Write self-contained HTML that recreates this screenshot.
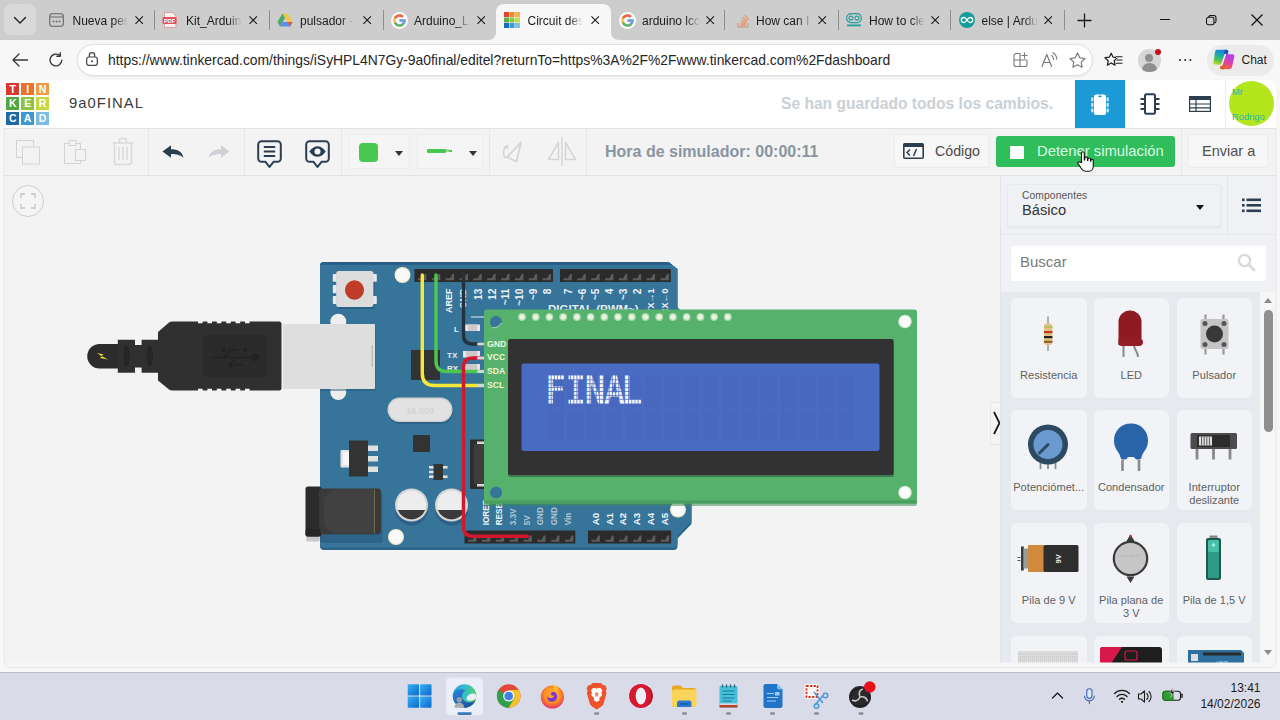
<!DOCTYPE html>
<html><head><meta charset="utf-8"><title>Circuit design</title>
<style>
*{box-sizing:border-box;margin:0;padding:0}
html,body{width:1280px;height:720px;overflow:hidden;background:#f3f3f3;font-family:"Liberation Sans",sans-serif;color:#222}
.abs{position:absolute}
svg{display:block;overflow:visible}
#tabbar{left:0;top:0;width:1280px;height:40px;background:#cdcdcd}
#addr{left:0;top:40px;width:1280px;height:40px;background:#f7f7f7}
#tkhead{left:0;top:80px;width:1280px;height:48px;background:#fff}
#tool{left:0;top:128px;width:1280px;height:48px;background:#f3f3f3;border-top:1px solid #e4e4e4;border-bottom:1px solid #e2e2e2}
#canvas{left:0;top:175px;width:1000px;height:493px;background:#f3f3f3}
#panel{left:1000px;top:175px;width:280px;height:493px;background:#f0f1f4}
#taskbar{left:0;top:672px;width:1280px;height:48px;background:#dadbe8}
.tabt{top:14.3px;height:16px;font-size:12px;color:#1b1b1b;white-space:nowrap;overflow:hidden;-webkit-mask-image:linear-gradient(90deg,#000 75%,transparent 100%);mask-image:linear-gradient(90deg,#000 75%,transparent 100%)}
.lg{width:12.8px;height:12.8px;color:#fff;font-size:10.5px;font-weight:bold;text-align:center;line-height:13px}
.vs{top:129px;width:1px;height:46px;background:#e6e6e6}
.bx{border:1px solid #ececec;border-radius:2px;background:#f5f5f5}
.tri{width:0;height:0;border-left:4.5px solid transparent;border-right:4.5px solid transparent;border-top:5px solid #2c3440}
.card{width:75.5px;border-radius:6px;background:#f1f3f6}
.cl{width:83.5px;text-align:center;font-size:11px;line-height:13.5px;color:#606060;padding-top:0.8px;white-space:nowrap;letter-spacing:0.05px}
</style></head><body>
<div id="tabbar" class="abs"></div>
<div id="addr" class="abs"></div>
<div id="tkhead" class="abs"></div>
<div id="tool" class="abs"></div>
<div id="canvas" class="abs"></div>
<div id="panel" class="abs"></div>
<div id="taskbar" class="abs"></div>
<div class="abs" style="left:4px;top:4px;width:32px;height:31px;border-radius:7px;background:#d9d9d9"></div>
<svg class="abs" style="left:13px;top:16px" width="14" height="9" viewBox="0 0 14 9"><path d="M1.5 1.5L7 7l5.5-5.5" fill="none" stroke="#222" stroke-width="1.4" stroke-linecap="round" stroke-linejoin="round"/></svg>
<svg class="abs" style="left:488px;top:4px" width="132" height="36" viewBox="0 0 132 36"><path d="M0 36C5 36 8 33 8 28V8C8 3.5 11.5 0 16 0H115C119.5 0 123 3.5 123 8V28C123 33 126 36 132 36z" fill="#f7f7f7"/></svg>
<div class="abs" style="left:48px;top:12px;width:16px;height:16px;display:flex;align-items:center;justify-content:center"><svg width="15" height="14" viewBox="0 0 15 14"><rect x="0.7" y="0.7" width="13.6" height="12.6" rx="2.5" fill="none" stroke="#666" stroke-width="1.1"/><line x1="0.7" y1="4" x2="14.3" y2="4" stroke="#666" stroke-width="1"/><circle cx="4.5" cy="8.5" r="0.9" fill="#666"/><circle cx="7.5" cy="8.5" r="0.9" fill="#666"/><circle cx="10.5" cy="8.5" r="0.9" fill="#666"/></svg></div>
<div class="abs tabt" style="left:72.5px;width:55px">Nueva pes</div>
<svg class="abs" style="left:135px;top:16.2px" width="8.4" height="8.4" viewBox="0 0 9 9"><path d="M0.5 0.5l8 8M8.5 0.5l-8 8" stroke="#1b1b1b" stroke-width="1.2" fill="none"/></svg>
<div class="abs" style="left:162px;top:12px;width:16px;height:16px;display:flex;align-items:center;justify-content:center"><svg width="16" height="16" viewBox="0 0 16 16"><path d="M2.5 0.5h8l3.5 3.5v11.5h-11.5z" fill="#f6f0f0" stroke="#d8a0a4" stroke-width="1"/><rect x="0.5" y="5" width="14" height="7" rx="1" fill="#e0525e"/><text x="7.5" y="10.6" font-size="5.5" font-weight="bold" fill="#fff" text-anchor="middle" font-family="Liberation Sans,sans-serif">PDF</text></svg></div>
<div class="abs tabt" style="left:186px;width:56px">Kit_Arduin</div>
<svg class="abs" style="left:249px;top:16.2px" width="8.4" height="8.4" viewBox="0 0 9 9"><path d="M0.5 0.5l8 8M8.5 0.5l-8 8" stroke="#1b1b1b" stroke-width="1.2" fill="none"/></svg>
<div class="abs" style="left:277px;top:12px;width:16px;height:16px;display:flex;align-items:center;justify-content:center"><svg width="16" height="14" viewBox="0 0 16 14"><path d="M5.4 0.5h5.2l5 8.6h-5.2z" fill="#f5c44a"/><path d="M5.4 0.5L0.4 9.1l2.6 4.4 5-8.6z" fill="#4aa86a"/><path d="M3 13.5h10l2.6-4.4H5.6z" fill="#5b8def"/><path d="M10.4 9.1h5.2L13 13.5z" fill="#e0574a"/></svg></div>
<div class="abs tabt" style="left:300px;width:54px">pulsador -</div>
<svg class="abs" style="left:362.5px;top:16.2px" width="8.4" height="8.4" viewBox="0 0 9 9"><path d="M0.5 0.5l8 8M8.5 0.5l-8 8" stroke="#1b1b1b" stroke-width="1.2" fill="none"/></svg>
<div class="abs" style="left:390.5px;top:11.5px;width:17px;height:17px;border-radius:50%;background:#fbfbfb"></div>
<div class="abs" style="left:391px;top:12px;width:16px;height:16px;display:flex;align-items:center;justify-content:center"><svg width="15" height="15" viewBox="0 0 48 48"><path fill="#f3c34b" d="M43.6 20.1H42V20H24v8h11.3C33.7 32.7 29.2 36 24 36c-6.6 0-12-5.4-12-12s5.4-12 12-12c3.1 0 5.8 1.2 8 3l5.7-5.7C34 6.1 29.3 4 24 4 13 4 4 13 4 24s9 20 20 20 20-9 20-20c0-1.3-.1-2.7-.4-3.9z"/><path fill="#e8665a" d="M6.3 14.7l6.6 4.8C14.7 15.1 19 12 24 12c3.1 0 5.8 1.2 8 3l5.7-5.7C34 6.1 29.3 4 24 4 16.3 4 9.7 8.3 6.3 14.7z"/><path fill="#5fb57a" d="M24 44c5.2 0 9.9-2 13.4-5.2l-6.2-5.2C29.2 35.1 26.7 36 24 36c-5.2 0-9.6-3.3-11.3-8l-6.5 5C9.5 39.6 16.2 44 24 44z"/><path fill="#6a9cf0" d="M43.6 20.1H42V20H24v8h11.3c-.8 2.2-2.2 4.2-4.1 5.6l6.2 5.2C37 39.2 44 34 44 24c0-1.3-.1-2.7-.4-3.9z"/></svg></div>
<div class="abs tabt" style="left:414px;width:56px">Arduino_LI</div>
<svg class="abs" style="left:477px;top:16.2px" width="8.4" height="8.4" viewBox="0 0 9 9"><path d="M0.5 0.5l8 8M8.5 0.5l-8 8" stroke="#1b1b1b" stroke-width="1.2" fill="none"/></svg>
<div class="abs" style="left:504px;top:12px;width:16px;height:16px;display:flex;align-items:center;justify-content:center"><svg width="16" height="16" viewBox="0 0 16 16"><rect x="0" y="0" width="5" height="5" fill="#e0452e"/><rect x="5.5" y="0" width="5" height="5" fill="#f08a2e"/><rect x="11" y="0" width="5" height="5" fill="#f6b04a"/><rect x="0" y="5.5" width="5" height="5" fill="#5bb04a"/><rect x="5.5" y="5.5" width="5" height="5" fill="#8cc63e"/><rect x="11" y="5.5" width="5" height="5" fill="#c4dc4a"/><rect x="0" y="11" width="5" height="5" fill="#1f6eb4"/><rect x="5.5" y="11" width="5" height="5" fill="#3d9ad6"/><rect x="11" y="11" width="5" height="5" fill="#7cc0e6"/></svg></div>
<div class="abs tabt" style="left:527.5px;width:55px">Circuit des</div>
<svg class="abs" style="left:591px;top:16.2px" width="8.4" height="8.4" viewBox="0 0 9 9"><path d="M0.5 0.5l8 8M8.5 0.5l-8 8" stroke="#1b1b1b" stroke-width="1.2" fill="none"/></svg>
<div class="abs" style="left:618.5px;top:11.5px;width:17px;height:17px;border-radius:50%;background:#fbfbfb"></div>
<div class="abs" style="left:619px;top:12px;width:16px;height:16px;display:flex;align-items:center;justify-content:center"><svg width="15" height="15" viewBox="0 0 48 48"><path fill="#f3c34b" d="M43.6 20.1H42V20H24v8h11.3C33.7 32.7 29.2 36 24 36c-6.6 0-12-5.4-12-12s5.4-12 12-12c3.1 0 5.8 1.2 8 3l5.7-5.7C34 6.1 29.3 4 24 4 13 4 4 13 4 24s9 20 20 20 20-9 20-20c0-1.3-.1-2.7-.4-3.9z"/><path fill="#e8665a" d="M6.3 14.7l6.6 4.8C14.7 15.1 19 12 24 12c3.1 0 5.8 1.2 8 3l5.7-5.7C34 6.1 29.3 4 24 4 16.3 4 9.7 8.3 6.3 14.7z"/><path fill="#5fb57a" d="M24 44c5.2 0 9.9-2 13.4-5.2l-6.2-5.2C29.2 35.1 26.7 36 24 36c-5.2 0-9.6-3.3-11.3-8l-6.5 5C9.5 39.6 16.2 44 24 44z"/><path fill="#6a9cf0" d="M43.6 20.1H42V20H24v8h11.3c-.8 2.2-2.2 4.2-4.1 5.6l6.2 5.2C37 39.2 44 34 44 24c0-1.3-.1-2.7-.4-3.9z"/></svg></div>
<div class="abs tabt" style="left:642px;width:58px">arduino lcc</div>
<svg class="abs" style="left:705.5px;top:16.2px" width="8.4" height="8.4" viewBox="0 0 9 9"><path d="M0.5 0.5l8 8M8.5 0.5l-8 8" stroke="#1b1b1b" stroke-width="1.2" fill="none"/></svg>
<div class="abs" style="left:735px;top:12px;width:16px;height:16px;display:flex;align-items:center;justify-content:center"><svg width="13" height="15" viewBox="0 0 13 15"><path d="M1 10v4h10v-4" fill="none" stroke="#c9a58c" stroke-width="1.3"/><path d="M3 12h6M3.2 9.6l5.8 1M4 7l5.4 2.4M5.6 4.4l4.6 3.8M8 2l3.4 4.8" stroke="#e8956a" stroke-width="1.3" fill="none"/></svg></div>
<div class="abs tabt" style="left:756px;width:56px">How can I</div>
<svg class="abs" style="left:817.5px;top:16.2px" width="8.4" height="8.4" viewBox="0 0 9 9"><path d="M0.5 0.5l8 8M8.5 0.5l-8 8" stroke="#1b1b1b" stroke-width="1.2" fill="none"/></svg>
<div class="abs" style="left:846px;top:12px;width:16px;height:16px;display:flex;align-items:center;justify-content:center"><svg width="16" height="14" viewBox="0 0 16 14"><rect x="0.6" y="0.6" width="14.8" height="9" rx="4.5" fill="none" stroke="#2a9c9c" stroke-width="1.2"/><circle cx="5" cy="5.1" r="2" fill="none" stroke="#2a9c9c" stroke-width="1.1"/><circle cx="11" cy="5.1" r="2" fill="none" stroke="#2a9c9c" stroke-width="1.1"/><rect x="1" y="11.5" width="14" height="1.8" fill="#2a9c9c"/></svg></div>
<div class="abs tabt" style="left:869px;width:56px">How to cle</div>
<svg class="abs" style="left:931px;top:16.2px" width="8.4" height="8.4" viewBox="0 0 9 9"><path d="M0.5 0.5l8 8M8.5 0.5l-8 8" stroke="#1b1b1b" stroke-width="1.2" fill="none"/></svg>
<div class="abs" style="left:958.5px;top:12px;width:16px;height:16px;display:flex;align-items:center;justify-content:center"><svg width="16" height="16" viewBox="0 0 16 16"><circle cx="8" cy="8" r="8" fill="#169c9c"/><path d="M8 8c-1-1.7-2-2.5-3.2-2.5a2.5 2.5 0 0 0 0 5c1.2 0 2.2-.8 3.2-2.5zm0 0c1-1.7 2-2.5 3.2-2.5a2.5 2.5 0 0 1 0 5c-1.2 0-2.2-.8-3.2-2.5z" fill="none" stroke="#fff" stroke-width="1.3"/></svg></div>
<div class="abs tabt" style="left:981.5px;width:56px">else | Ardu</div>
<svg class="abs" style="left:1043.5px;top:16.2px" width="8.4" height="8.4" viewBox="0 0 9 9"><path d="M0.5 0.5l8 8M8.5 0.5l-8 8" stroke="#1b1b1b" stroke-width="1.2" fill="none"/></svg>
<div class="abs" style="left:154px;top:10px;width:1px;height:20px;background:#8d8d8d"></div>
<div class="abs" style="left:269px;top:10px;width:1px;height:20px;background:#8d8d8d"></div>
<div class="abs" style="left:382.5px;top:10px;width:1px;height:20px;background:#8d8d8d"></div>
<div class="abs" style="left:724px;top:10px;width:1px;height:20px;background:#8d8d8d"></div>
<div class="abs" style="left:837.5px;top:10px;width:1px;height:20px;background:#8d8d8d"></div>
<div class="abs" style="left:950px;top:10px;width:1px;height:20px;background:#8d8d8d"></div>
<div class="abs" style="left:1063.5px;top:10px;width:1px;height:20px;background:#8d8d8d"></div>
<svg class="abs" style="left:1077px;top:13px" width="15" height="15" viewBox="0 0 15 15"><path d="M7.5 0.5v14M0.5 7.5h14" stroke="#1b1b1b" stroke-width="1.3" fill="none"/></svg>
<div class="abs" style="left:1160px;top:19px;width:10px;height:1.3px;background:#111"></div>
<svg class="abs" style="left:1205.5px;top:15px" width="10.5" height="10.5" viewBox="0 0 12 12"><rect x="0.6" y="2.6" width="8.5" height="8.5" rx="2" fill="none" stroke="#111" stroke-width="1.2"/><path d="M3 2.4V2.6C3 1.4 3.9 0.6 5 0.6H9C10.4 0.6 11.4 1.6 11.4 3V7C11.4 8.1 10.6 9 9.4 9" fill="none" stroke="#111" stroke-width="1.2"/></svg>
<svg class="abs" style="left:1251px;top:14px" width="12" height="12" viewBox="0 0 12 12"><path d="M0.5 0.5l11 11M11.5 0.5l-11 11" stroke="#111" stroke-width="1.3" fill="none"/></svg>
<!-- back -->
<svg class="abs" style="left:12px;top:53px" width="16" height="14" viewBox="0 0 16 14"><path d="M15.5 7H1.2M7 1L1 7l6 6" fill="none" stroke="#3a3a3a" stroke-width="1.4" stroke-linecap="round" stroke-linejoin="round"/></svg>
<!-- refresh -->
<svg class="abs" style="left:48px;top:52px" width="16" height="16" viewBox="0 0 16 16"><path d="M13.8 8.2A5.9 5.9 0 1 1 11.6 3.4" fill="none" stroke="#3a3a3a" stroke-width="1.4" stroke-linecap="round"/><path d="M12.3 0.8v3.4h-3.4" fill="none" stroke="#3a3a3a" stroke-width="1.4" stroke-linecap="round" stroke-linejoin="round"/></svg>
<!-- pill -->
<div class="abs" style="left:76.5px;top:44px;width:1016.5px;height:32px;border-radius:16px;background:#fff;border:1px solid #e3e3e3;box-shadow:0 0.5px 1.5px rgba(0,0,0,0.1)"></div>
<!-- lock -->
<svg class="abs" style="left:86px;top:52px" width="12" height="14" viewBox="0 0 12 14"><rect x="0.7" y="5" width="10.6" height="8.3" rx="2" fill="none" stroke="#444" stroke-width="1.2"/><path d="M3.3 5V3.4a2.7 2.7 0 0 1 5.4 0V5" fill="none" stroke="#444" stroke-width="1.2"/><circle cx="6" cy="9.2" r="1" fill="#444"/></svg>
<div class="abs" id="url" style="left:108px;top:52px;font-size:13.9px;color:#262626;white-space:nowrap;letter-spacing:-0.01px">https://www.tinkercad.com/things/iSyHPL4N7Gy-9a0final/editel?returnTo=https%3A%2F%2Fwww.tinkercad.com%2Fdashboard</div>
<!-- apps icon -->
<svg class="abs" style="left:1013px;top:52px" width="16" height="16" viewBox="0 0 16 16"><path d="M7 1.5H3a2 2 0 0 0-2 2v9a2 2 0 0 0 2 2h9a2 2 0 0 0 2-2V9M7 1.5v13M1 8h13M11.5 0.8v5.4M8.8 3.5h5.4" fill="none" stroke="#7a7a7a" stroke-width="1.1" stroke-linecap="round"/></svg>
<!-- read aloud -->
<svg class="abs" style="left:1041px;top:52px" width="18" height="16" viewBox="0 0 18 16"><path d="M1 14.5L5.8 2.5 10.6 14.5M2.7 10.5h6.2" fill="none" stroke="#7a7a7a" stroke-width="1.2" stroke-linecap="round" stroke-linejoin="round"/><path d="M10.5 3.5a5 5 0 0 1 2.2 4M12 0.8a8 8 0 0 1 3.8 6.4" fill="none" stroke="#7a7a7a" stroke-width="1.1" stroke-linecap="round"/></svg>
<!-- star -->
<svg class="abs" style="left:1069px;top:52px" width="17" height="16" viewBox="0 0 17 16"><path d="M8.5 1l2.3 4.8 5.2.7-3.8 3.6.9 5.2-4.6-2.5-4.6 2.5.9-5.2L1 6.5l5.2-.7z" fill="none" stroke="#7a7a7a" stroke-width="1.2" stroke-linejoin="round"/></svg>
<!-- favorites -->
<svg class="abs" style="left:1104px;top:52px" width="19" height="16" viewBox="0 0 19 16"><path d="M7.2 1.2l1.9 4 4.3.5-3.2 3 .8 4.4L7.2 11l-3.8 2.1.8-4.4L1 5.7l4.3-.5z" fill="none" stroke="#222" stroke-width="1.25" stroke-linejoin="round"/><path d="M12 4.75h6.2M12.5 8h5.7M12 11.25h6.2" stroke="#f7f7f7" stroke-width="2.6"/><path d="M12.3 4.75h5.7M13 8h5M12.3 11.25h5.7" stroke="#222" stroke-width="1.2" stroke-linecap="round"/></svg>
<!-- profile -->
<div class="abs" style="left:1138px;top:49px;width:22.5px;height:22.5px;border-radius:50%;background:#d6d6d6;overflow:hidden"><div class="abs" style="left:7.25px;top:4.5px;width:8px;height:8px;border-radius:50%;background:#8f8f8f"></div><div class="abs" style="left:4px;top:13.5px;width:14.5px;height:12px;border-radius:7px 7px 0 0;background:#8f8f8f"></div></div>
<div class="abs" style="left:1154.5px;top:48.7px;width:6px;height:6px;border-radius:50%;background:#c50f1f"></div>
<!-- dots -->
<div class="abs" style="left:1178.5px;top:58.5px;width:2.6px;height:2.6px;border-radius:50%;background:#222;box-shadow:5.2px 0 0 #222,10.4px 0 0 #222"></div>
<!-- chat pill -->
<div class="abs" style="left:1206.5px;top:44.5px;width:67.5px;height:31px;border-radius:15.5px;background:#ebebeb"></div>
<svg class="abs" style="left:1212.5px;top:49.4px" width="22" height="21" viewBox="0 0 22 21"><defs><linearGradient id="cpa" x1="0.3" y1="0" x2="0" y2="1"><stop offset="0" stop-color="#1a8ad8"/><stop offset="0.35" stop-color="#20b0a0"/><stop offset="0.65" stop-color="#58c848"/><stop offset="1" stop-color="#e8e020"/></linearGradient><linearGradient id="cpb" x1="0.3" y1="0" x2="0" y2="1"><stop offset="0" stop-color="#b040e8"/><stop offset="0.45" stop-color="#e040a0"/><stop offset="1" stop-color="#f07030"/></linearGradient></defs><path d="M4 0.8H13Q15.8 0.8 15 3.5L12 14Q11.5 15.8 9.5 15.8H2.5Q0 15.8 0.5 13.3L2 3Q2.3 0.8 4 0.8z" fill="url(#cpa)"/><path d="M11.5 0.8H13Q16 0.8 15.2 3.5L14.6 5.5H11z" fill="#1a50c0"/><path d="M13 5.3H19Q22 5.3 21.3 8L19 18Q18.5 20.3 16 20.3H9Q6.5 20.3 7.3 18L10.8 7Q11.3 5.3 13 5.3z" fill="url(#cpb)"/><path d="M12.3 5.5L8.5 16.5" stroke="#f4f4f4" stroke-width="1.6" stroke-linecap="round"/><path d="M7.5 17.5Q6.8 20.3 9.5 20.3H11L12.5 15.5z" fill="#d85a20"/></svg>
<div class="abs" style="left:1241.5px;top:53.3px;font-size:12px;color:#222">Chat</div>

<div class="abs lg" style="left:6.4px;top:82.6px;background:#d63a2e">T</div>
<div class="abs lg" style="left:21.25px;top:82.6px;background:#e8742e">I</div>
<div class="abs lg" style="left:36.1px;top:82.6px;background:#f09c44">N</div>
<div class="abs lg" style="left:6.4px;top:97.4px;background:#50a842">K</div>
<div class="abs lg" style="left:21.25px;top:97.4px;background:#8ec442">E</div>
<div class="abs lg" style="left:36.1px;top:97.4px;background:#c4d844">R</div>
<div class="abs lg" style="left:6.4px;top:112.2px;background:#1e68a8">C</div>
<div class="abs lg" style="left:21.25px;top:112.2px;background:#3c98d2">A</div>
<div class="abs lg" style="left:36.1px;top:112.2px;background:#7cbee2">D</div>
<div class="abs" style="left:69px;top:95px;font-size:14.8px;letter-spacing:1.05px;color:#3c3c3c;white-space:nowrap">9a0FINAL</div>
<div class="abs" style="left:781px;top:94.5px;font-size:15.6px;font-weight:bold;color:#cad0d5;white-space:nowrap">Se han guardado todos los cambios.</div>
<div class="abs" style="left:1075px;top:80px;width:50px;height:48px;background:#1c9ad6"></div>
<svg class="abs" style="left:1089px;top:93px" width="22" height="24" viewBox="0 0 22 24"><rect x="5" y="1.5" width="12" height="20.5" rx="2" fill="#fff"/><ellipse cx="11" cy="3.3" rx="1.8" ry="0.9" fill="#1c9ad6"/><g fill="#d8f0fc"><rect x="2.3" y="4.5" width="2" height="3.8"/><rect x="2.3" y="10" width="2" height="3.8"/><rect x="2.3" y="15.5" width="2" height="3.8"/><rect x="17.7" y="4.5" width="2" height="3.8"/><rect x="17.7" y="10" width="2" height="3.8"/><rect x="17.7" y="15.5" width="2" height="3.8"/></g></svg>
<svg class="abs" style="left:1140px;top:93px" width="20" height="22" viewBox="0 0 20 22"><rect x="5" y="1.2" width="10" height="19.6" rx="1.5" fill="none" stroke="#2c3e50" stroke-width="2"/><path d="M0.5 6h4M0.5 11h4M0.5 16h4M15.5 6h4M15.5 11h4M15.5 16h4" stroke="#2c3e50" stroke-width="1.8"/></svg>
<svg class="abs" style="left:1189px;top:96px" width="22" height="16" viewBox="0 0 22 16"><rect x="0" y="0" width="22" height="4" fill="#2c3e50"/><rect x="0.6" y="0.6" width="20.8" height="14.8" fill="none" stroke="#2c3e50" stroke-width="1.2"/><path d="M0 8h22M0 11.8h22M7 4v12" stroke="#2c3e50" stroke-width="1.2"/></svg>
<div class="abs" style="left:1225px;top:80px;width:1px;height:48px;background:#ececec"></div>
<div class="abs" style="left:1228.5px;top:81px;width:45px;height:45px;border-radius:50%;background:#b4e61e"></div>
<div class="abs" style="left:1232px;top:87px;font-size:9.3px;color:#22b8b0;white-space:nowrap">Mr</div>
<div class="abs" style="left:1232px;top:111.5px;font-size:9.3px;color:#22b8b0;white-space:nowrap">Rodrigo</div>
<svg class="abs" style="left:0;top:175px" width="1003" height="493" viewBox="0 175 1003 493" font-family="Liberation Sans, sans-serif">
<defs><filter id="sh" x="-10%" y="-10%" width="120%" height="130%"><feGaussianBlur stdDeviation="1.2"/></filter></defs>
<circle cx="28" cy="201" r="15.5" fill="#f5f5f5" stroke="#cfcfcf" stroke-width="1"/>
<path d="M21 198v-4h4M31 194h4v4M35 204v4h-4M25 208h-4v-4" fill="none" stroke="#c4c4c4" stroke-width="1.3"/>
<g>
<path d="M99.5 344H118V368.5H99.5A12.25 12.25 0 0 1 99.5 344z" fill="#2c2c2c"/>
<path d="M97 353l6.5 1.5-2 1.5 6.5 3.5-8-1.5 2-1.5z" fill="#f0e030"/>
<path d="M117.8 339.8H135V345H141.6V339.8H158.5V372.8H141.6V367.5H135V372.8H117.8z" fill="#303030"/>
<ellipse cx="126.5" cy="356" rx="3.3" ry="10.5" fill="#262626"/><ellipse cx="149.8" cy="356" rx="3.3" ry="10.5" fill="#262626"/>
<path d="M158 332L169 322.5Q170.5 321.5 172.5 321.5H198v1.8h4.6v-1.8H207.4v1.8h4.6v-1.8H216.8v1.8h4.6v-1.8H226.2v1.8h4.6v-1.8H235.6v1.8h4.6v-1.8H245v1.8h4.6v-1.8H279Q281.5 321.5 281.5 324V388Q281.5 390.5 279 390.5H249.6v-1.8h-4.6v1.8H240.2v-1.8h-4.6v1.8H230.8v-1.8h-4.6v1.8H221.4v-1.8h-4.6v1.8H212.0v-1.8h-4.6v1.8H202.6v-1.8h-4.6v1.8H172.5Q170.5 390.5 169 389.5L158 380.5z" fill="#303030"/>
<rect x="203.5" y="335" width="64" height="42" fill="#2a2a2a"/>
<g stroke="#222" stroke-width="1.3" fill="none"><path d="M212 357.5h42M224 357.5l6-7.5h8M231 357.5l6 7.5h6"/></g><circle cx="224" cy="350" r="2.2" fill="#222"/><rect x="252" y="354" width="7" height="7" fill="#222"/><circle cx="231" cy="365" r="2.2" fill="#222"/><path d="M243 347.5h4v4h-4z" fill="#222"/>
</g>
<g>
<path d="M324 262H668.5L677.5 269V307.5L691.5 321.5V524L677.5 538.5V546Q677.5 550 673.5 550H324Q320 550 320 546V266Q320 262 324 262z" fill="#2c6489"/>
<path d="M324 262H668.5L677.5 269V307.5L691.5 321.5V521.5L677.5 536V543.5Q677.5 547.5 673.5 547.5H324Q320 547.5 320 543.5V266Q320 262 324 262z" fill="#367499"/>
<path d="M324 262H668.5L672.4 265H320.1Q320.6 262 324 262z" fill="#2b6188"/>
<circle cx="338.3" cy="321.7" r="8" fill="#eeeeee"/><circle cx="338.3" cy="392" r="8" fill="#eeeeee"/>
<rect x="320" y="325" width="55.5" height="66" fill="#28597c" opacity="0.5"/>
<rect x="283" y="324" width="92" height="65" rx="1" fill="#dedede"/><rect x="371.5" y="345" width="1.5" height="22" fill="#bdbdbd"/>
<rect x="337.5" y="274" width="37.2" height="35" rx="2" fill="#28597c" opacity="0.6"/>
<g fill="#e4eaf0"><rect x="332.8" y="274" width="4" height="7.7" rx="0.8"/><rect x="332.8" y="285" width="4" height="8.3" rx="0.8"/><rect x="332.8" y="296" width="4" height="8" rx="0.8"/><rect x="372.8" y="274" width="4" height="7.7" rx="0.8"/><rect x="372.8" y="296" width="4" height="8" rx="0.8"/></g>
<rect x="336.2" y="271" width="37.2" height="36" rx="2.5" fill="#dcdcdc"/>
<circle cx="354.5" cy="290.5" r="9.3" fill="#a83a28"/><circle cx="354.5" cy="289.5" r="9.3" fill="#c03c28"/>
<circle cx="402.5" cy="275" r="8" fill="#f3e9c8"/><circle cx="402.5" cy="275" r="6.8" fill="#fafafa"/>
<circle cx="396" cy="537" r="8" fill="#f3e9c8"/><circle cx="396" cy="537" r="6.8" fill="#fafafa"/>
<circle cx="678" cy="509.5" r="8" fill="#f3e9c8"/><circle cx="678" cy="509.5" r="6.8" fill="#fafafa"/>
<rect x="414.5" y="269" width="138.5" height="13" fill="#2b2b2b"/>
<path d="M418.0 278.2h4.6l2-4.2h1.8v6.2H418.0z" fill="#5c5c5c"/>
<path d="M431.9 278.2h4.6l2-4.2h1.8v6.2H431.9z" fill="#5c5c5c"/>
<path d="M445.7 278.2h4.6l2-4.2h1.8v6.2H445.7z" fill="#5c5c5c"/>
<path d="M459.6 278.2h4.6l2-4.2h1.8v6.2H459.6z" fill="#5c5c5c"/>
<path d="M473.4 278.2h4.6l2-4.2h1.8v6.2H473.4z" fill="#5c5c5c"/>
<path d="M487.2 278.2h4.6l2-4.2h1.8v6.2H487.2z" fill="#5c5c5c"/>
<path d="M501.1 278.2h4.6l2-4.2h1.8v6.2H501.1z" fill="#5c5c5c"/>
<path d="M515.0 278.2h4.6l2-4.2h1.8v6.2H515.0z" fill="#5c5c5c"/>
<path d="M528.8 278.2h4.6l2-4.2h1.8v6.2H528.8z" fill="#5c5c5c"/>
<path d="M542.6 278.2h4.6l2-4.2h1.8v6.2H542.6z" fill="#5c5c5c"/>
<rect x="560" y="269" width="110.8" height="13" fill="#2b2b2b"/>
<path d="M563.5 278.2h4.6l2-4.2h1.8v6.2H563.5z" fill="#5c5c5c"/>
<path d="M577.4 278.2h4.6l2-4.2h1.8v6.2H577.4z" fill="#5c5c5c"/>
<path d="M591.2 278.2h4.6l2-4.2h1.8v6.2H591.2z" fill="#5c5c5c"/>
<path d="M605.0 278.2h4.6l2-4.2h1.8v6.2H605.0z" fill="#5c5c5c"/>
<path d="M618.9 278.2h4.6l2-4.2h1.8v6.2H618.9z" fill="#5c5c5c"/>
<path d="M632.8 278.2h4.6l2-4.2h1.8v6.2H632.8z" fill="#5c5c5c"/>
<path d="M646.6 278.2h4.6l2-4.2h1.8v6.2H646.6z" fill="#5c5c5c"/>
<path d="M660.5 278.2h4.6l2-4.2h1.8v6.2H660.5z" fill="#5c5c5c"/>
<rect x="464.5" y="530.5" width="110.8" height="13" fill="#2b2b2b"/>
<path d="M468.0 539.7h4.6l2-4.2h1.8v6.2H468.0z" fill="#5c5c5c"/>
<path d="M481.9 539.7h4.6l2-4.2h1.8v6.2H481.9z" fill="#5c5c5c"/>
<path d="M495.7 539.7h4.6l2-4.2h1.8v6.2H495.7z" fill="#5c5c5c"/>
<path d="M509.6 539.7h4.6l2-4.2h1.8v6.2H509.6z" fill="#5c5c5c"/>
<path d="M523.4 539.7h4.6l2-4.2h1.8v6.2H523.4z" fill="#5c5c5c"/>
<path d="M537.2 539.7h4.6l2-4.2h1.8v6.2H537.2z" fill="#5c5c5c"/>
<path d="M551.1 539.7h4.6l2-4.2h1.8v6.2H551.1z" fill="#5c5c5c"/>
<path d="M565.0 539.7h4.6l2-4.2h1.8v6.2H565.0z" fill="#5c5c5c"/>
<rect x="588" y="530.5" width="83.1" height="13" fill="#2b2b2b"/>
<path d="M591.5 539.7h4.6l2-4.2h1.8v6.2H591.5z" fill="#5c5c5c"/>
<path d="M605.4 539.7h4.6l2-4.2h1.8v6.2H605.4z" fill="#5c5c5c"/>
<path d="M619.2 539.7h4.6l2-4.2h1.8v6.2H619.2z" fill="#5c5c5c"/>
<path d="M633.0 539.7h4.6l2-4.2h1.8v6.2H633.0z" fill="#5c5c5c"/>
<path d="M646.9 539.7h4.6l2-4.2h1.8v6.2H646.9z" fill="#5c5c5c"/>
<path d="M660.8 539.7h4.6l2-4.2h1.8v6.2H660.8z" fill="#5c5c5c"/>
<rect x="411" y="350" width="29" height="30" fill="#333"/>
<text transform="translate(452.4 288.6) rotate(-90)" font-size="9" font-weight="bold" fill="#eef3f7" text-anchor="end">AREF</text>
<text transform="translate(466.2 288.6) rotate(-90)" font-size="9" font-weight="bold" fill="#eef3f7" text-anchor="end">GND</text>
<text transform="translate(481.7 288.6) rotate(-90)" font-size="10.2" font-weight="bold" fill="#eef3f7" text-anchor="end">13</text>
<text transform="translate(495.5 288.6) rotate(-90)" font-size="10.2" font-weight="bold" fill="#eef3f7" text-anchor="end">12</text>
<text transform="translate(509.2 288.6) rotate(-90)" font-size="10.2" font-weight="bold" fill="#eef3f7" text-anchor="end">~11</text>
<text transform="translate(523.0 288.6) rotate(-90)" font-size="10.2" font-weight="bold" fill="#eef3f7" text-anchor="end">~10</text>
<text transform="translate(536.7 288.6) rotate(-90)" font-size="10.2" font-weight="bold" fill="#eef3f7" text-anchor="end">~9</text>
<text transform="translate(550.5 288.6) rotate(-90)" font-size="10.2" font-weight="bold" fill="#eef3f7" text-anchor="end">8</text>
<text transform="translate(571.7 288.6) rotate(-90)" font-size="10.2" font-weight="bold" fill="#eef3f7" text-anchor="end">7</text>
<text transform="translate(585.5 288.6) rotate(-90)" font-size="10.2" font-weight="bold" fill="#eef3f7" text-anchor="end">~6</text>
<text transform="translate(599.2 288.6) rotate(-90)" font-size="10.2" font-weight="bold" fill="#eef3f7" text-anchor="end">~5</text>
<text transform="translate(613.0 288.6) rotate(-90)" font-size="10.2" font-weight="bold" fill="#eef3f7" text-anchor="end">4</text>
<text transform="translate(626.7 288.6) rotate(-90)" font-size="10.2" font-weight="bold" fill="#eef3f7" text-anchor="end">~3</text>
<text transform="translate(640.5 288.6) rotate(-90)" font-size="10.2" font-weight="bold" fill="#eef3f7" text-anchor="end">2</text>
<text transform="translate(654.0 288.6) rotate(-90)" font-size="9" font-weight="bold" fill="#eef3f7" text-anchor="end">TX→1</text>
<text transform="translate(667.7 288.6) rotate(-90)" font-size="9" font-weight="bold" fill="#eef3f7" text-anchor="end">RX←0</text>
<text transform="translate(488.5 525.3) rotate(-90)" font-size="8.2" font-weight="bold" fill="#eef3f7">IOREF</text>
<text transform="translate(502.0 525.3) rotate(-90)" font-size="8.2" font-weight="bold" fill="#eef3f7">RESET</text>
<text transform="translate(515.5 525.3) rotate(-90)" font-size="8.2" font-weight="bold" fill="#b4c8d6">3.3V</text>
<text transform="translate(529.5 525.3) rotate(-90)" font-size="8.2" font-weight="bold" fill="#b4c8d6">5V</text>
<text transform="translate(543.3 525.3) rotate(-90)" font-size="8.2" font-weight="bold" fill="#b4c8d6">GND</text>
<text transform="translate(557.0 525.3) rotate(-90)" font-size="8.2" font-weight="bold" fill="#b4c8d6">GND</text>
<text transform="translate(570.8 525.3) rotate(-90)" font-size="8.2" font-weight="bold" fill="#b4c8d6">Vin</text>
<text transform="translate(598.8 525.3) rotate(-90)" font-size="9.7" font-weight="bold" fill="#f4f7fa">A0</text>
<text transform="translate(612.6 525.3) rotate(-90)" font-size="9.7" font-weight="bold" fill="#f4f7fa">A1</text>
<text transform="translate(626.4 525.3) rotate(-90)" font-size="9.7" font-weight="bold" fill="#f4f7fa">A2</text>
<text transform="translate(640.2 525.3) rotate(-90)" font-size="9.7" font-weight="bold" fill="#f4f7fa">A3</text>
<text transform="translate(654.0 525.3) rotate(-90)" font-size="9.7" font-weight="bold" fill="#f4f7fa">A4</text>
<text transform="translate(667.8 525.3) rotate(-90)" font-size="9.7" font-weight="bold" fill="#f4f7fa">A5</text>
<text x="548" y="313" font-size="11.5" font-weight="bold" fill="#e6eef4">DIGITAL (PWM~)</text>
<text x="454" y="332" font-size="8" font-weight="bold" fill="#e6eef4">L</text>
<text x="447" y="358" font-size="8" font-weight="bold" fill="#e6eef4">TX</text>
<text x="447" y="371" font-size="8" font-weight="bold" fill="#e6eef4">RX</text>
<rect x="465" y="324.5" width="15" height="6.5" fill="#e6e6e6"/><rect x="468" y="324.5" width="9" height="6.5" fill="#cfc8c8"/>
<rect x="463" y="351" width="17" height="6.5" fill="#e6e6e6"/><rect x="466" y="351" width="11" height="6.5" fill="#cfc8c8"/>
<rect x="463" y="364" width="17" height="6.5" fill="#e6e6e6"/><rect x="466" y="364" width="11" height="6.5" fill="#cfc8c8"/>
<path d="M471 317h15" stroke="#e6eef4" stroke-width="1"/>
<rect x="388" y="399.5" width="65" height="24.5" rx="12.2" fill="#28597c" opacity="0.6"/>
<rect x="387.5" y="397.5" width="65" height="24.5" rx="12.2" fill="#d2d2d2"/><rect x="389" y="399" width="62" height="21.5" rx="10.7" fill="#e2e2e2"/>
<text x="420" y="413.5" font-size="9" font-weight="bold" fill="#d4d4d4" text-anchor="middle">16.000</text>
<rect x="413" y="435" width="17" height="17" rx="1" fill="#333"/>
<rect x="340.5" y="450" width="10" height="17.5" rx="1" fill="#e4e4e4"/><rect x="343" y="452" width="6" height="13" fill="#f6f6f6"/>
<rect x="349" y="440.5" width="19" height="36" fill="#333"/>
<rect x="368" y="445.5" width="10" height="5.5" fill="#e0e0e0"/>
<rect x="368" y="456" width="10" height="5.5" fill="#e0e0e0"/>
<rect x="368" y="466.5" width="10" height="5.5" fill="#e0e0e0"/>
<rect x="433.5" y="464" width="9.5" height="16" fill="#333"/>
<rect x="429" y="466" width="4.5" height="2.6" fill="#e0e0e0"/>
<rect x="429" y="470.7" width="4.5" height="2.6" fill="#e0e0e0"/>
<rect x="429" y="475.4" width="4.5" height="2.6" fill="#e0e0e0"/>
<rect x="443" y="466" width="4.5" height="2.6" fill="#e0e0e0"/>
<rect x="443" y="475.4" width="4.5" height="2.6" fill="#e0e0e0"/>
<rect x="470" y="439.5" width="20" height="49.5" rx="1" fill="#2d2d2d"/><rect x="473.5" y="444" width="14" height="40" fill="#3d3d3d"/><rect x="477" y="441.5" width="10" height="2.5" fill="#d8d8d8"/><rect x="477" y="484" width="10" height="2.5" fill="#d8d8d8"/>
<circle cx="411.5" cy="509" r="16.5" fill="#28597c" opacity="0.7"/>
<circle cx="411.5" cy="505" r="16.5" fill="#d4d4d4"/><circle cx="411.5" cy="505" r="14.5" fill="#ededed"/>
<path d="M397.9 510a14.5 14.5 0 0 0 27.2 0z" fill="#3a3a3a"/>
<circle cx="451.5" cy="509" r="16.5" fill="#28597c" opacity="0.7"/>
<circle cx="451.5" cy="505" r="16.5" fill="#d4d4d4"/><circle cx="451.5" cy="505" r="14.5" fill="#ededed"/>
<path d="M437.9 510a14.5 14.5 0 0 0 27.2 0z" fill="#3a3a3a"/>
<rect x="306.2" y="535" width="13.5" height="6.5" rx="1.5" fill="#c8c8c8"/>
<rect x="320" y="492" width="62.5" height="51" rx="3" fill="#28597c" opacity="0.6"/>
<rect x="305.5" y="486.5" width="16" height="50" rx="2.5" fill="#2b2b2b"/><rect x="319" y="488.5" width="62" height="45.8" rx="3.5" fill="#3a3a3a"/><path d="M340 489.5H374.5V533.3H340Q323.5 533.3 323.5 517V506Q323.5 489.5 340 489.5z" fill="#414141"/><rect x="305.5" y="529" width="15" height="7.5" rx="2" fill="#252525"/><path d="M374.5 489.5v44" stroke="#9a8a5a" stroke-width="0.6"/>
</g>
<g fill="none" stroke-width="3.4" stroke-linecap="round">
<path d="M463.5 275V335Q463.5 344 472.5 344H486" stroke="#24323e"/>
<path d="M436 275V361Q436 371.5 446.5 371.5H486" stroke="#4cc84c"/>
<path d="M422.3 275V373.5Q422.3 385.5 434.3 385.5H486" stroke="#f4e838"/>
<path d="M486 358H473Q463.5 358 463.5 367.5V527Q463.5 536.2 473 536.2H527.5" stroke="#d01a30" stroke-width="3.5"/>
</g>
<rect x="477" y="342.5" width="8" height="3" rx="1.5" fill="#cfd6e0"/>
<rect x="477" y="356.5" width="8" height="3" rx="1.5" fill="#cfd6e0"/>
<rect x="477" y="370.0" width="8" height="3" rx="1.5" fill="#cfd6e0"/>
<rect x="477" y="384.0" width="8" height="3" rx="1.5" fill="#cfd6e0"/>
<g>
<rect x="484" y="311" width="433" height="195" rx="2.5" fill="#3f8c54" opacity="0.55"/>
<rect x="484" y="309.5" width="433" height="194" rx="2.5" fill="#56b16c"/>
<rect x="484" y="500.5" width="433" height="3" rx="1.5" fill="#4a9e5f"/>
<circle cx="496" cy="322" r="6" fill="#367499"/><path d="M491 327.5Q498 329.5 501.8 322L502.5 326 497 329.5z" fill="#56b16c"/><path d="M492.5 327.8Q498.5 328 501.5 323" fill="none" stroke="#cfe6d4" stroke-width="0.8"/>
<circle cx="496" cy="492.5" r="6" fill="#367499"/><path d="M490 491Q492 486 498 486.5L494 485 489.5 488z" fill="#56b16c"/>
<circle cx="905" cy="321.5" r="6.8" fill="#cdeacd"/><circle cx="905" cy="321.5" r="5.7" fill="#fbfbfb"/>
<circle cx="905" cy="492.5" r="6.8" fill="#cdeacd"/><circle cx="905" cy="492.5" r="5.7" fill="#fbfbfb"/>
<circle cx="522.0" cy="317" r="4" fill="#a4d6a8"/><circle cx="522.0" cy="317" r="2.7" fill="#eaf2e0"/>
<circle cx="535.7" cy="317" r="4" fill="#a4d6a8"/><circle cx="535.7" cy="317" r="2.7" fill="#eaf2e0"/>
<circle cx="549.4" cy="317" r="4" fill="#a4d6a8"/><circle cx="549.4" cy="317" r="2.7" fill="#eaf2e0"/>
<circle cx="563.2" cy="317" r="4" fill="#a4d6a8"/><circle cx="563.2" cy="317" r="2.7" fill="#eaf2e0"/>
<circle cx="576.9" cy="317" r="4" fill="#a4d6a8"/><circle cx="576.9" cy="317" r="2.7" fill="#eaf2e0"/>
<circle cx="590.6" cy="317" r="4" fill="#a4d6a8"/><circle cx="590.6" cy="317" r="2.7" fill="#eaf2e0"/>
<circle cx="604.3" cy="317" r="4" fill="#a4d6a8"/><circle cx="604.3" cy="317" r="2.7" fill="#eaf2e0"/>
<circle cx="618.0" cy="317" r="4" fill="#a4d6a8"/><circle cx="618.0" cy="317" r="2.7" fill="#eaf2e0"/>
<circle cx="631.8" cy="317" r="4" fill="#a4d6a8"/><circle cx="631.8" cy="317" r="2.7" fill="#eaf2e0"/>
<circle cx="645.5" cy="317" r="4" fill="#a4d6a8"/><circle cx="645.5" cy="317" r="2.7" fill="#eaf2e0"/>
<circle cx="659.2" cy="317" r="4" fill="#a4d6a8"/><circle cx="659.2" cy="317" r="2.7" fill="#eaf2e0"/>
<circle cx="672.9" cy="317" r="4" fill="#a4d6a8"/><circle cx="672.9" cy="317" r="2.7" fill="#eaf2e0"/>
<circle cx="686.6" cy="317" r="4" fill="#a4d6a8"/><circle cx="686.6" cy="317" r="2.7" fill="#eaf2e0"/>
<circle cx="700.4" cy="317" r="4" fill="#a4d6a8"/><circle cx="700.4" cy="317" r="2.7" fill="#eaf2e0"/>
<circle cx="714.1" cy="317" r="4" fill="#a4d6a8"/><circle cx="714.1" cy="317" r="2.7" fill="#eaf2e0"/>
<circle cx="727.8" cy="317" r="4" fill="#a4d6a8"/><circle cx="727.8" cy="317" r="2.7" fill="#eaf2e0"/>
<text x="487" y="346.5" font-size="8.6" font-weight="bold" fill="#eef8d4">GND</text>
<text x="487" y="360.3" font-size="8.6" font-weight="bold" fill="#eef8d4">VCC</text>
<text x="487" y="374" font-size="8.6" font-weight="bold" fill="#eef8d4">SDA</text>
<text x="487" y="387.8" font-size="8.6" font-weight="bold" fill="#eef8d4">SCL</text>
<rect x="508" y="340" width="386" height="137" rx="2" fill="#2a4a34" opacity="0.5"/>
<rect x="508" y="339" width="385.5" height="136" rx="2" fill="#333232"/>
<rect x="521.5" y="363.5" width="358" height="87.5" rx="2.5" fill="#4a6bc2"/>
<rect x="548.00" y="375.9" width="15.9" height="31.2" fill="#4365b8" opacity="0.35"/>
<rect x="567.35" y="375.9" width="15.9" height="31.2" fill="#4365b8" opacity="0.35"/>
<rect x="586.7" y="375.9" width="15.9" height="31.2" fill="#4365b8" opacity="0.35"/>
<rect x="606.05" y="375.9" width="15.9" height="31.2" fill="#4365b8" opacity="0.35"/>
<rect x="625.4" y="375.9" width="15.9" height="31.2" fill="#4365b8" opacity="0.35"/>
<rect x="644.75" y="375.9" width="15.9" height="31.2" fill="#4365b8" opacity="0.35"/>
<rect x="664.1" y="375.9" width="15.9" height="31.2" fill="#4365b8" opacity="0.35"/>
<rect x="683.45" y="375.9" width="15.9" height="31.2" fill="#4365b8" opacity="0.35"/>
<rect x="702.8" y="375.9" width="15.9" height="31.2" fill="#4365b8" opacity="0.35"/>
<rect x="722.15" y="375.9" width="15.9" height="31.2" fill="#4365b8" opacity="0.35"/>
<rect x="741.5" y="375.9" width="15.9" height="31.2" fill="#4365b8" opacity="0.35"/>
<rect x="760.85" y="375.9" width="15.9" height="31.2" fill="#4365b8" opacity="0.35"/>
<rect x="780.2" y="375.9" width="15.9" height="31.2" fill="#4365b8" opacity="0.35"/>
<rect x="799.55" y="375.9" width="15.9" height="31.2" fill="#4365b8" opacity="0.35"/>
<rect x="818.9" y="375.9" width="15.9" height="31.2" fill="#4365b8" opacity="0.35"/>
<rect x="838.25" y="375.9" width="15.9" height="31.2" fill="#4365b8" opacity="0.35"/>
<rect x="548.00" y="409.3" width="15.9" height="31.2" fill="#4365b8" opacity="0.35"/>
<rect x="567.35" y="409.3" width="15.9" height="31.2" fill="#4365b8" opacity="0.35"/>
<rect x="586.7" y="409.3" width="15.9" height="31.2" fill="#4365b8" opacity="0.35"/>
<rect x="606.05" y="409.3" width="15.9" height="31.2" fill="#4365b8" opacity="0.35"/>
<rect x="625.4" y="409.3" width="15.9" height="31.2" fill="#4365b8" opacity="0.35"/>
<rect x="644.75" y="409.3" width="15.9" height="31.2" fill="#4365b8" opacity="0.35"/>
<rect x="664.1" y="409.3" width="15.9" height="31.2" fill="#4365b8" opacity="0.35"/>
<rect x="683.45" y="409.3" width="15.9" height="31.2" fill="#4365b8" opacity="0.35"/>
<rect x="702.8" y="409.3" width="15.9" height="31.2" fill="#4365b8" opacity="0.35"/>
<rect x="722.15" y="409.3" width="15.9" height="31.2" fill="#4365b8" opacity="0.35"/>
<rect x="741.5" y="409.3" width="15.9" height="31.2" fill="#4365b8" opacity="0.35"/>
<rect x="760.85" y="409.3" width="15.9" height="31.2" fill="#4365b8" opacity="0.35"/>
<rect x="780.2" y="409.3" width="15.9" height="31.2" fill="#4365b8" opacity="0.35"/>
<rect x="799.55" y="409.3" width="15.9" height="31.2" fill="#4365b8" opacity="0.35"/>
<rect x="818.9" y="409.3" width="15.9" height="31.2" fill="#4365b8" opacity="0.35"/>
<rect x="838.25" y="409.3" width="15.9" height="31.2" fill="#4365b8" opacity="0.35"/>
<text id="lcdtxt" transform="scale(1 1.133)" x="545.3 565.75 584.95 604.4 622.05" y="355.9" font-family="DejaVu Sans Mono, Liberation Mono, monospace" font-size="33" fill="#f6f8fd" stroke="#f6f8fd" stroke-width="0.8">FINAL</text>
<path d="M551.18 375v29M554.36 375v29M557.54 375v29M560.72 375v29M570.53 375v29M573.71 375v29M576.89 375v29M580.07 375v29M589.88 375v29M593.06 375v29M596.24 375v29M599.42 375v29M609.23 375v29M612.41 375v29M615.59 375v29M618.77 375v29M628.58 375v29M631.76 375v29M634.94 375v29M638.12 375v29M546 379.8h97M546 383.7h97M546 387.6h97M546 391.5h97M546 395.4h97M546 399.3h97" stroke="#4a6bc2" stroke-width="0.75" fill="none"/>
</g>
<rect x="990.5" y="402.5" width="12" height="42" fill="#f5f5f5" stroke="#e6e6e6" stroke-width="1"/>
<path d="M994 412l5.5 11-5.5 11" fill="none" stroke="#1b1b1b" stroke-width="1.8"/>
</svg>
<div id="tbline" class="abs" style="left:0;top:175px;width:1280px;height:1px;background:#e3e3e3"></div>
<!-- toolbar separators -->
<div class="abs vs" style="left:148px"></div>
<div class="abs vs" style="left:244px"></div>
<div class="abs vs" style="left:341px"></div>
<div class="abs vs" style="left:489px"></div>
<div class="abs vs" style="left:586px"></div>
<div class="abs vs" style="left:1181px"></div>
<!-- copy -->
<svg class="abs" style="left:16px;top:140px" width="24" height="25" viewBox="0 0 24 25"><rect x="0.5" y="0.5" width="17" height="17" fill="#f3f3f3" stroke="#d4d4d4" stroke-width="1"/><rect x="6.5" y="7" width="17" height="17" fill="#f3f3f3" stroke="#d4d4d4" stroke-width="1"/></svg>
<!-- paste -->
<svg class="abs" style="left:64px;top:140px" width="23" height="25" viewBox="0 0 23 25"><rect x="0.5" y="3.5" width="16" height="20" fill="none" stroke="#d4d4d4" stroke-width="1"/><rect x="5" y="0.5" width="7" height="5" fill="#f3f3f3" stroke="#d4d4d4" stroke-width="1"/><rect x="11.5" y="9.5" width="10" height="11" fill="#f3f3f3" stroke="#d4d4d4" stroke-width="1"/></svg>
<!-- trash -->
<svg class="abs" style="left:112px;top:138px" width="22" height="27" viewBox="0 0 22 27"><path d="M0.5 5h21M7.5 5V2a1.5 1.5 0 0 1 1.5-1.5h4A1.5 1.5 0 0 1 14.5 2V5M2.5 5v19a2.5 2.5 0 0 0 2.5 2.5h12a2.5 2.5 0 0 0 2.5-2.5V5M7 9v13M11 9v13M15 9v13" fill="none" stroke="#d6d9dc" stroke-width="1.5"/></svg>
<!-- undo -->
<svg class="abs" style="left:162px;top:144.5px" width="22" height="16" viewBox="0 0 22 16"><path d="M0.5 6.5L9 0.3v3.9c6.5 0 11.5 2.3 12.5 8.8C19 10 15 9 9 9V12.7z" fill="#2c3e50"/></svg>
<!-- redo -->
<svg class="abs" style="left:208px;top:144.5px" width="22" height="16" viewBox="0 0 22 16"><path d="M21.5 6.5L13 0.3v3.9c-6.5 0-11.5 2.3-12.5 8.8C3 10 7 9 13 9V12.7z" fill="#cdd1d5"/></svg>
<!-- notes -->
<svg class="abs" style="left:257px;top:139.5px" width="25" height="30" viewBox="0 0 25 30"><path d="M4.5 1.2h16a3.3 3.3 0 0 1 3.3 3.3v14a3.3 3.3 0 0 1-3.3 3.3H16.5L12.5 27 8.5 21.8H4.5a3.3 3.3 0 0 1-3.3-3.3v-14A3.3 3.3 0 0 1 4.5 1.2z" fill="none" stroke="#2c3e50" stroke-width="2" stroke-linejoin="round"/><path d="M6.8 7h11.4M6.8 11.5h11.4M6.8 16h11.4" stroke="#2c3e50" stroke-width="2.2"/></svg>
<!-- eye -->
<svg class="abs" style="left:305px;top:139.5px" width="25" height="30" viewBox="0 0 25 30"><path d="M4.5 1.2h16a3.3 3.3 0 0 1 3.3 3.3v14a3.3 3.3 0 0 1-3.3 3.3H16.5L12.5 27 8.5 21.8H4.5a3.3 3.3 0 0 1-3.3-3.3v-14A3.3 3.3 0 0 1 4.5 1.2z" fill="none" stroke="#2c3e50" stroke-width="2" stroke-linejoin="round"/><path d="M4.3 11.5C7 7.5 10 6.2 12.5 6.2s5.5 1.3 8.2 5.3C18 15.5 15 16.8 12.5 16.8S7 15.5 4.3 11.5z" fill="#2c3e50"/><circle cx="12.5" cy="11.5" r="3" fill="#f3f5f7"/></svg>
<!-- colour box -->
<div class="abs bx" style="left:349px;top:134px;width:61px;height:35px"></div>
<div class="abs" style="left:359px;top:143px;width:19px;height:19px;border-radius:4px;background:#48c850"></div>
<div class="abs tri" style="left:395px;top:151px"></div>
<!-- line type -->
<div class="abs bx" style="left:417px;top:134px;width:66px;height:35px"></div>
<div class="abs" style="left:427px;top:148.5px;width:19px;height:4px;border-radius:1px;background:#48c850"></div>
<div class="abs" style="left:446px;top:149px;width:3px;height:3px;background:#8fdc95"></div>
<div class="abs" style="left:449px;top:149.5px;width:3px;height:2px;background:#48c850"></div>
<div class="abs tri" style="left:468.5px;top:151px"></div>
<!-- rotate -->
<svg class="abs" style="left:501px;top:141px" width="22" height="23" viewBox="0 0 22 23"><path d="M20 1.5L15.5 20.5 6 16z" fill="none" stroke="#d3d6d9" stroke-width="1.8" stroke-linejoin="round"/><path d="M6 4.5C2 8 1.5 13 4.5 17.5" fill="none" stroke="#d3d6d9" stroke-width="1.8"/><path d="M2.5 5.5L7.5 3.5 7 8.5z" fill="#d3d6d9"/></svg>
<!-- mirror -->
<svg class="abs" style="left:547px;top:137px" width="30" height="29" viewBox="0 0 30 29"><path d="M15 0v29" stroke="#d3d6d9" stroke-width="1.5"/><path d="M11.5 5.5v17H1.5z" fill="none" stroke="#d3d6d9" stroke-width="1.5" stroke-linejoin="round"/><path d="M18.5 5.5v17h10z" fill="none" stroke="#d3d6d9" stroke-width="1.5" stroke-linejoin="round"/></svg>
<div class="abs" style="left:605px;top:143px;font-size:16px;font-weight:bold;color:#8995a1;white-space:nowrap">Hora de simulador: 00:00:11</div>
<!-- codigo -->
<div class="abs bx" style="left:894px;top:134px;width:95px;height:34px;background:#f7f7f7"></div>
<svg class="abs" style="left:903px;top:143px" width="21" height="16" viewBox="0 0 21 16"><rect x="0.8" y="0.8" width="19.4" height="14.4" rx="1" fill="none" stroke="#2c3e50" stroke-width="1.6"/><rect x="0.8" y="0.8" width="19.4" height="3.2" fill="#2c3e50"/><path d="M7 6.5L4 9.5l3 3M10.5 13l3-7" fill="none" stroke="#2c3e50" stroke-width="1.5"/></svg>
<div class="abs" style="left:935px;top:143.3px;font-size:14.2px;color:#4a4a4a;white-space:nowrap">Código</div>
<!-- detener -->
<div class="abs" style="left:996px;top:136px;width:179px;height:31px;border-radius:3px;background:#30bd5c"></div>
<div class="abs" style="left:1010px;top:146px;width:13.5px;height:12.5px;border-radius:1px;background:#fff"></div>
<div class="abs" style="left:1037px;top:142.8px;font-size:14.8px;color:#dcfce4;white-space:nowrap">Detener simulación</div>
<!-- enviar -->
<div class="abs bx" style="left:1188px;top:134px;width:80px;height:34px;background:#f7f7f7"></div>
<div class="abs" style="left:1202px;top:143px;font-size:14.5px;color:#505050;white-space:nowrap">Enviar a</div>
<!-- cursor hand -->
<svg class="abs" style="left:1077px;top:151px" width="17" height="21" viewBox="0 0 17 21"><path d="M4.5 11.5V2.2a1.4 1.4 0 0 1 2.8 0V9h.4V7.4a1.4 1.4 0 0 1 2.8 0V9.4h.4V8.3a1.3 1.3 0 0 1 2.6 0v1.8h.4V9.6a1.2 1.2 0 0 1 2.4 0v5.4c0 3-1.8 5.3-4.3 5.3H8.5c-1.8 0-3-1-4-2.5L1 12.6c-.6-1 .6-2.3 1.8-1.5z" fill="#fff" stroke="#111" stroke-width="1.1" stroke-linejoin="round"/></svg>

<div id="psep" class="abs" style="left:1001px;top:234px;width:279px;height:1px;background:#e6e7ea"></div>
<div class="abs" style="left:1000px;top:176px;width:1px;height:492px;background:#e3e5e8"></div>
<div class="abs" style="left:1007px;top:184px;width:214px;height:43px;border-radius:3px;background:#f0f1f4;border:1px solid #e8e9ec;box-shadow:0 1px 2px rgba(0,0,0,0.05)"></div>
<div class="abs" style="left:1022px;top:190px;font-size:10.3px;color:#555;white-space:nowrap;letter-spacing:0.1px">Componentes</div>
<div class="abs" style="left:1022px;top:202px;font-size:14.7px;color:#333;white-space:nowrap">Básico</div>
<div class="abs tri" style="left:1196px;top:204.5px;border-top-color:#111"></div>
<div class="abs" style="left:1227px;top:176px;width:1px;height:58px;background:#e3e5e8"></div>
<svg class="abs" style="left:1242px;top:198px" width="19" height="15" viewBox="0 0 19 15"><g fill="#2c3e50"><rect x="0" y="0.5" width="2.6" height="2.6"/><rect x="4.5" y="0.5" width="14.5" height="2.6"/><rect x="0" y="6" width="2.6" height="2.6"/><rect x="4.5" y="6" width="14.5" height="2.6"/><rect x="0" y="11.5" width="2.6" height="2.6"/><rect x="4.5" y="11.5" width="14.5" height="2.6"/></g></svg>
<div class="abs" style="left:1011px;top:245.5px;width:254.5px;height:35.5px;border-radius:2px;background:#fff"></div>
<div class="abs" style="left:1020px;top:253px;font-size:15px;color:#7a7a7a;white-space:nowrap">Buscar</div>
<svg class="abs" style="left:1237px;top:253px" width="19" height="19" viewBox="0 0 19 19"><circle cx="7.5" cy="7.5" r="5.6" fill="none" stroke="#dadada" stroke-width="2.4"/><path d="M11.8 11.8L17 17" stroke="#dadada" stroke-width="3" stroke-linecap="round"/></svg>
<div class="abs" style="left:1001px;top:291.5px;width:259px;height:376.5px;background:#e6e9ed"></div>
<div class="abs" style="left:1260px;top:291.5px;width:20px;height:376.5px;background:#f6f6f6"></div>
<div class="abs" style="left:1264px;top:310px;width:9px;height:122px;border-radius:4.5px;background:#8f8f8f"></div>
<div class="abs" style="left:1264px;top:298px;width:0;height:0;border-left:4.5px solid transparent;border-right:4.5px solid transparent;border-bottom:5.5px solid #8a8a8a"></div>
<div class="abs" style="left:1264px;top:650px;width:0;height:0;border-left:4.5px solid transparent;border-right:4.5px solid transparent;border-top:5.5px solid #8a8a8a"></div>
<div class="abs card" style="left:1011px;top:298px;height:100px"></div>
<div class="abs cl" style="left:1007px;top:368px">Resistencia</div>
<div class="abs card" style="left:1093.5px;top:298px;height:100px"></div>
<div class="abs cl" style="left:1089.5px;top:368px">LED</div>
<div class="abs card" style="left:1176.5px;top:298px;height:100px"></div>
<div class="abs cl" style="left:1172.5px;top:368px">Pulsador</div>
<div class="abs card" style="left:1011px;top:410px;height:100px"></div>
<div class="abs cl" style="left:1007px;top:480px">Potenciómet...</div>
<div class="abs card" style="left:1093.5px;top:410px;height:100px"></div>
<div class="abs cl" style="left:1089.5px;top:480px">Condensador</div>
<div class="abs card" style="left:1176.5px;top:410px;height:100px"></div>
<div class="abs cl" style="left:1172.5px;top:480px">Interruptor<br>deslizante</div>
<div class="abs card" style="left:1011px;top:523px;height:100px"></div>
<div class="abs cl" style="left:1007px;top:593px">Pila de 9 V</div>
<div class="abs card" style="left:1093.5px;top:523px;height:100px"></div>
<div class="abs cl" style="left:1089.5px;top:593px">Pila plana de<br>3 V</div>
<div class="abs card" style="left:1176.5px;top:523px;height:100px"></div>
<div class="abs cl" style="left:1172.5px;top:593px">Pila de 1,5 V</div>
<div class="abs card" style="left:1011px;top:636px;height:32px"></div>
<div class="abs card" style="left:1093.5px;top:636px;height:32px"></div>
<div class="abs card" style="left:1176.5px;top:636px;height:32px"></div>
<svg class="abs" style="left:1003px;top:291px" width="257" height="377" viewBox="1003 291 257 377" font-family="Liberation Sans, sans-serif">
<path d="M1048 316.5v34.5" stroke="#9a9a9a" stroke-width="1.5"/><rect x="1044" y="323.5" width="8.4" height="21.5" rx="3" fill="#e2c284"/><rect x="1044" y="326" width="8.4" height="2" fill="#b8c060"/><rect x="1044" y="331" width="8.4" height="2.2" fill="#c83228"/><rect x="1044" y="336" width="8.4" height="2.2" fill="#222"/><rect x="1044" y="340.8" width="8.4" height="2" fill="#8a5a28"/>
<path d="M1123.5 345v12M1134 345c0 5 4 6 4 12" stroke="#8a8a8a" stroke-width="2" fill="none"/><path d="M1118.5 345V322a11.5 11.5 0 0 1 23 0V345z" fill="#8e1a22"/><path d="M1118.5 339h21.5q3 0 3 3v0q0 4-4 4h-17.5q-3 0-3-3z" fill="#931e28"/>
<g transform="translate(1.5 1.5)"><path d="M1204 313v40M1222 313v40" stroke="#9a9a9a" stroke-width="2.2"/><rect x="1199" y="317.5" width="28" height="30" rx="2" fill="#c4c4c4"/><circle cx="1213" cy="332.5" r="8.5" fill="#383838"/><circle cx="1203.5" cy="322" r="2.5" fill="#555"/><circle cx="1222.5" cy="322" r="2.5" fill="#555"/><circle cx="1203.5" cy="343" r="2.5" fill="#555"/><circle cx="1222.5" cy="343" r="2.5" fill="#555"/></g>
<path d="M1040.5 460v9M1048 460v9M1055.5 460v9" stroke="#8a8a8a" stroke-width="1.8"/><circle cx="1048" cy="444.5" r="20" fill="#2c4a60"/><circle cx="1048" cy="444.5" r="14.5" fill="#6a9ad0"/><path d="M1048 444.5l-8.5 8.5" stroke="#2c4a60" stroke-width="3" stroke-linecap="round"/>
<path d="M1122.5 460v11M1139 460v11" stroke="#8a8a8a" stroke-width="2.6"/><path transform="translate(1 -0.5)" d="M1130 424c10 0 17 7.5 17 17 0 7-3.5 10-5.5 14-1 2-1 5-3 5h-3c-1.5 0-1.5-2.5-3-2.5h-5c-1.5 0-1.5 2.5-3 2.5h-3c-2 0-2-3-3-5-2-4-5.5-7-5.5-14 0-9.5 7-17 17-17z" fill="#2a64a8"/>
<path d="M1197 449v10.5M1213.5 449v10.5M1230 449v10.5" stroke="#8a8a8a" stroke-width="2.8"/><rect x="1190.5" y="433" width="46.5" height="16" rx="1.5" fill="#4c4c4c"/><rect x="1197" y="435" width="33" height="12" fill="#2c2c2c"/><rect x="1199" y="436.5" width="13" height="9" fill="#e0e0e0"/><path d="M1201.6 436.5v9M1204.2 436.5v9M1206.8 436.5v9M1209.4 436.5v9" stroke="#5a5a5a" stroke-width="1"/>
<path d="M1017.5 557.5h3M1017.5 560.5h3" stroke="#555" stroke-width="1.2"/><rect x="1021" y="546.5" width="2.8" height="24" fill="#3a3a3a"/><rect x="1023.5" y="548.5" width="5" height="20" fill="#9a9a9a"/><rect x="1028" y="545" width="16" height="27" rx="1" fill="#d08a3c"/><rect x="1043.5" y="545" width="35" height="27" rx="1.5" fill="#2e2e2e"/><text transform="translate(1060.5 563.5) rotate(-90)" font-size="7.5" font-weight="bold" fill="#eaeaea">9V</text>
<path d="M1130.5 534.5l4 6.5h-8zM1130.5 583l4-6.5h-8z" fill="#3a3a3a"/><circle cx="1130.5" cy="536" r="1.2" fill="#c83228"/><circle cx="1130.5" cy="558.5" r="17.8" fill="#3a3a3a"/><circle cx="1130.5" cy="558.5" r="15.6" fill="#c6c6c6"/><text x="1130" y="557" font-size="3.6" fill="#b0b0b0" text-anchor="middle">Coin Cell 3V</text>
<rect x="1209.5" y="535.5" width="8" height="4" fill="#8a8a8a"/><rect x="1206" y="538" width="15" height="42" rx="2" fill="#1f5a4e"/><rect x="1208" y="540" width="11" height="38" rx="1.5" fill="#2f9a86"/><rect x="1208" y="540" width="11" height="12" rx="1.5" fill="#48c0a8"/><path d="M1213.5 543v4M1211.5 545h4" stroke="#d8fff4" stroke-width="0.8"/>
<rect x="1018" y="651" width="60" height="17" fill="#dcdcdc"/><path d="M1018 654h60M1018 657h60M1018 660h60M1018 663h60M1018 666h60" stroke="#bdbdbd" stroke-width="1" stroke-dasharray="1 1"/>
<path d="M1100 650Q1100 647 1103 647H1159Q1162 647 1162 650V668H1100z" fill="#1e1e1e"/><path d="M1100 650Q1100 647 1103 647H1122L1108 668H1100z" fill="#d81848"/><rect x="1125" y="651" width="12" height="9" rx="2" fill="none" stroke="#d81848" stroke-width="1.2"/>
<path d="M1188 650H1241L1244 653V668H1188z" fill="#2f6f9e"/><rect x="1191" y="654" width="7" height="7" fill="#dcdcdc"/><rect x="1203" y="652.5" width="38" height="3" fill="#2b2b2b"/><text x="1222" y="664.5" font-size="5" fill="#d8e6f0" text-anchor="middle">UNO</text>
</svg>
<svg class="abs" style="left:0;top:80px" width="1280" height="593" viewBox="0 80 1280 593">
<rect x="4" y="662.5" width="1272" height="5.5" fill="#f6f6f6"/>
<path fill-rule="evenodd" fill="#f7f7f7" d="M0 80H1280V673H0zM11 80H1269A7 7 0 0 1 1276 87V660.5A7 7 0 0 1 1269 667.5H11A7 7 0 0 1 4 660.5V87A7 7 0 0 1 11 80z"/>
<path fill="none" stroke="#e4e4e4" stroke-width="0.9" d="M4 129V660.5A7 7 0 0 0 11 667.5H1269A7 7 0 0 0 1276 660.5V129"/>
</svg>

<svg class="abs" style="left:0;top:672px" width="1280" height="48" viewBox="0 672 1280 48" font-family="Liberation Sans, sans-serif">
<defs>
<linearGradient id="wing" x1="0" y1="0" x2="1" y2="1"><stop offset="0" stop-color="#38b0f0"/><stop offset="1" stop-color="#0a68d0"/></linearGradient>
<linearGradient id="edg" x1="0" y1="0" x2="1" y2="1"><stop offset="0" stop-color="#2c84d8"/><stop offset="1" stop-color="#184c9c"/></linearGradient>
<linearGradient id="edg2" x1="0" y1="0.3" x2="1" y2="0.5"><stop offset="0" stop-color="#2a9ee0"/><stop offset="0.5" stop-color="#34c0c8"/><stop offset="1" stop-color="#58d060"/></linearGradient>
<radialGradient id="ffx" cx="0.5" cy="0.4" r="0.6"><stop offset="0" stop-color="#ffd83a"/><stop offset="0.6" stop-color="#ff8a20"/><stop offset="1" stop-color="#e8306a"/></radialGradient>
</defs>
<rect x="0" y="672" width="1280" height="1" fill="#bcbdc9"/>
<!-- windows -->
<g fill="url(#wing)"><rect x="407.7" y="684.3" width="11.4" height="11.2" rx="0.8"/><rect x="420.1" y="684.3" width="11.4" height="11.2" rx="0.8"/><rect x="407.7" y="696.5" width="11.4" height="11.2" rx="0.8"/><rect x="420.1" y="696.5" width="11.4" height="11.2" rx="0.8"/></g>
<!-- edge highlight -->
<rect x="446.3" y="677.8" width="36.7" height="37.4" rx="4" fill="#eceef8" stroke="#e4e6f2" stroke-width="0.6"/>
<rect x="457.5" y="712.3" width="14.2" height="2.6" rx="1.3" fill="#3a78b4"/>
<!-- edge icon -->
<circle cx="464.6" cy="696" r="11.8" fill="url(#edg2)"/>
<path d="M452.9 694.5C455 689.5 461 688 465.5 690.5C462 692.5 461 696.5 463 699.5C465.5 703 471 703.5 475.5 700.5C473.5 705 469 707.8 464.6 707.8C457.5 707.8 452 701.5 452.9 694.5z" fill="url(#edg)"/>
<path d="M466.5 699.5C469 701.5 473.5 701 476.2 698C476.8 695 475.5 693.5 473 693.5C469.5 693.5 466.5 696 466.5 699.5z" fill="#eceef8"/>
<circle cx="459.3" cy="699.8" r="2.7" fill="#9c9c9c"/><path d="M454.5 707.8c0-3.6 2.1-5.1 4.8-5.1s4.8 1.5 4.8 5.1z" fill="#acacac"/>
<!-- chrome -->
<circle cx="508.7" cy="696" r="11.8" fill="#e0483a"/>
<path d="M508.7 696L498.5 690.1A11.8 11.8 0 0 0 508.7 707.8L514.6 697.6z" fill="#2fa04e"/>
<path d="M508.7 696L514.6 697.6 508.7 707.8A11.8 11.8 0 0 0 518.9 690.1H508.7z" fill="#f6c22c"/>
<circle cx="508.7" cy="696" r="5.6" fill="#f4f4f4"/><circle cx="508.7" cy="696" r="4.3" fill="#3a80e8"/>
<!-- firefox -->
<circle cx="552.4" cy="697" r="11.6" fill="url(#ffx)"/><path d="M553 684c3 1.5 5 4 5.5 6.5l-4-1.5z" fill="#ffcf30"/>
<circle cx="552" cy="696.5" r="5.2" fill="#7a3ad0"/><path d="M546 693c2-3 6-3.5 8.5-1.5-2 0-3.5 1-3.5 2.5s2 2 3.5 1.5c-1 3-5.5 3.5-7.5 1z" fill="#ff9a30"/>
<!-- brave -->
<path d="M590.5 685l2-2h8.4l2 2 2.6.6 1.2 3-.8 2.5.6 2.2-2.6 9.5c-.5 1.8-1.5 3-3 4l-3.2 2.2c-.6.4-1.4.4-2 0l-3.2-2.2c-1.5-1-2.5-2.2-3-4l-2.6-9.5.6-2.2-.8-2.5 1.2-3z" fill="#f0522c"/>
<path d="M596.7 688.5l3.5-.8 2.2 2.8-1 2.2.8 2.2-3 3.4.5 2-3 1.8-3-1.8.5-2-3-3.4.8-2.2-1-2.2 2.2-2.8z" fill="#fff"/>
<path d="M596.7 692l1.8 1.2-.6 3.3h-2.4l-.6-3.3z" fill="#f0522c" opacity="0.7"/>
<rect x="594.2" y="712.3" width="5" height="2.4" rx="1.2" fill="#8a8c96"/>
<!-- opera -->
<ellipse cx="640.9" cy="696" rx="11.8" ry="12" fill="#d81830"/><ellipse cx="640.9" cy="696" rx="5.2" ry="8.6" fill="#eceef8"/>
<path d="M646.5 686c3 2 4.8 6 4.8 10s-1.8 8-4.8 10c4.5-1.5 6.2-6 6.2-10s-1.7-8.5-6.2-10z" fill="#a80f24"/>
<!-- explorer -->
<path d="M672 687.5q0-2 2-2h6.5l2.5 2.5h11q2 0 2 2V705q0 2-2 2H674q-2 0-2-2z" fill="#e8a824"/>
<rect x="672" y="689.5" width="24.5" height="17.5" rx="2" fill="#fad45a"/>
<path d="M677 707v-4q0-2.5 2.5-2.5h9.5q2.5 0 2.5 2.5v4z" fill="#2a7ad0"/><rect x="680" y="703" width="9" height="1.8" rx="0.9" fill="#1a58a8"/>
<rect x="682" y="712.3" width="5" height="2.4" rx="1.2" fill="#8a8c96"/>
<!-- notepad -->
<rect x="719.5" y="686" width="18" height="21.5" rx="1.5" fill="#46bfd8"/><rect x="719.5" y="704.5" width="18" height="3" fill="#b8402c"/><rect x="719.5" y="703.5" width="18" height="1.3" fill="#f0f0f0"/>
<path d="M722.5 691h12M722.5 694.5h12M722.5 698h12M722.5 701h9" stroke="#1a7a98" stroke-width="1.2"/>
<path d="M722.5 684.5v3M726.5 684.5v3M730.5 684.5v3M734.5 684.5v3" stroke="#2a6a80" stroke-width="1.4"/>
<rect x="726" y="712.3" width="5" height="2.4" rx="1.2" fill="#8a8c96"/>
<!-- libreoffice writer -->
<path d="M763.5 686q0-2 2-2h11.5l5.5 5.5V706q0 2-2 2h-15q-2 0-2-2z" fill="#2274c8"/><path d="M777 684l5.5 5.5H779q-2 0-2-2z" fill="#7ac0f0"/>
<path d="M767 693.5h7M767 697.5h11M767 701h9" stroke="#9ad0f4" stroke-width="1.2"/><rect x="775" y="692" width="4.5" height="3.5" fill="#9ad0f4"/>
<rect x="770" y="712.3" width="5" height="2.4" rx="1.2" fill="#8a8c96"/>
<!-- snipping -->
<rect x="804.5" y="684" width="15" height="15" rx="1.5" fill="#f8f4f2"/><rect x="806.5" y="686" width="11" height="11" fill="none" stroke="#c83a24" stroke-width="1.8" stroke-dasharray="2.2 1.4"/>
<path d="M814 692l9 11M823 695.5l-8 9.5" stroke="#4a9ad8" stroke-width="1.6" fill="none"/><circle cx="825.5" cy="695.5" r="2.3" fill="none" stroke="#4a9ad8" stroke-width="1.5"/><circle cx="816.5" cy="706" r="2.3" fill="none" stroke="#4a9ad8" stroke-width="1.5"/>
<rect x="814" y="712.3" width="5" height="2.4" rx="1.2" fill="#8a8c96"/>
<!-- obs -->
<circle cx="860" cy="697" r="11" fill="#2a2a2e"/><circle cx="860" cy="697" r="9" fill="none" stroke="#1a1a1c" stroke-width="1"/>
<path d="M860 697c-2-4 0-7.5 3-8M860 697c4.5-1 7 1.5 7.5 4.5M860 697c-2 4.5-5.5 4.5-8 3" stroke="#c8c8c8" stroke-width="1.6" fill="none"/>
<circle cx="869.8" cy="687" r="5.8" fill="#e8101c"/>
<rect x="858.5" y="712.3" width="5" height="2.4" rx="1.2" fill="#8a8c96"/>
<!-- tray -->
<path d="M1052.5 698l5-5 5 5" fill="none" stroke="#1b1b1b" stroke-width="1.3" stroke-linecap="round" stroke-linejoin="round"/>
<rect x="1086.8" y="688.8" width="5.2" height="9.6" rx="2.6" fill="#dde6f6" stroke="#3f66b8" stroke-width="1.1"/><path d="M1084.5 696a4.9 4.9 0 0 0 9.8 0M1089.4 701v2.6" fill="none" stroke="#3f66b8" stroke-width="1.1" stroke-linecap="round"/>
<g fill="none" stroke="#1b1b1b" stroke-width="1.3" stroke-linecap="round"><path d="M1114.5 693.5a10.5 10.5 0 0 1 15 0M1117 696.5a7 7 0 0 1 10 0M1119.5 699.3a3.5 3.5 0 0 1 5 0"/></g><circle cx="1122" cy="701.8" r="1.1" fill="#1b1b1b"/>
<path d="M1138.5 694h2.5l3.5-3.2v11.4l-3.5-3.2h-2.5z" fill="none" stroke="#1b1b1b" stroke-width="1.1" stroke-linejoin="round"/><path d="M1146.7 693.5a4 4 0 0 1 0 6M1149 691.5a7 7 0 0 1 0 10" fill="none" stroke="#1b1b1b" stroke-width="1.1" stroke-linecap="round"/>
<rect x="1163" y="691.2" width="17.5" height="9" rx="2.5" fill="none" stroke="#1b1b1b" stroke-width="1.1"/><path d="M1165.5 691.2h7.5v9h-7.5a2.5 2.5 0 0 1-2.5-2.5v-4a2.5 2.5 0 0 1 2.5-2.5z" fill="#2e9e2e" stroke="#1f7a1f" stroke-width="1.1"/><path d="M1182 694.2v3" stroke="#1b1b1b" stroke-width="1.4" stroke-linecap="round"/><path d="M1172.8 687.5l-3.4 5.6h2.6l-1 4.2 3.8-6h-2.7z" fill="#151515" stroke="#dadbe8" stroke-width="0.6"/>
<text x="1260.5" y="692.3" font-size="12" fill="#1b1b1b" text-anchor="end">13:41</text>
<text x="1260.5" y="708" font-size="12" fill="#1b1b1b" text-anchor="end">14/02/2026</text>
</svg>

</body></html>
